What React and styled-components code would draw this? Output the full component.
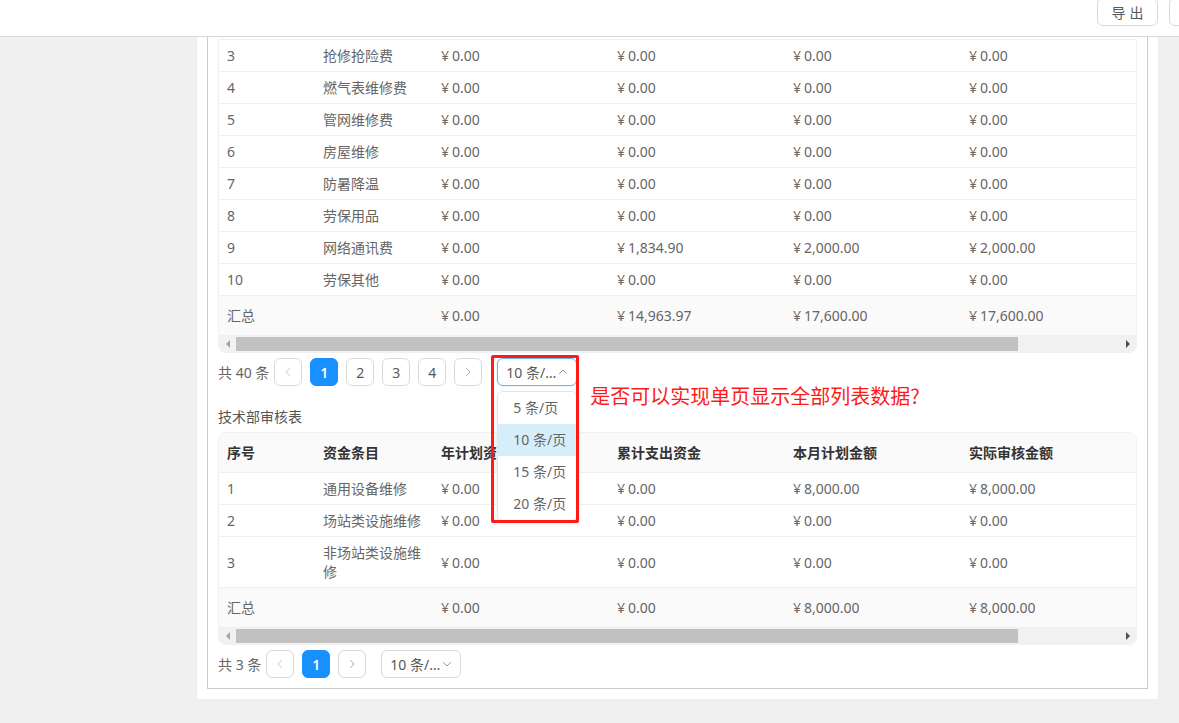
import styled, { createGlobalStyle } from "styled-components"

const GlobalStyle = createGlobalStyle`
    * { box-sizing: border-box; }
    html, body {
        margin: 0;
        padding: 0;
        background: #f0f0f0;
        font-family: "Noto Sans", "Noto Sans CJK SC", sans-serif;
        font-size: 14px;
        color: #666666;
        overflow: hidden;
    }
`

const StyledTopBar = styled.header`
    height: 37px;
    background: #ffffff;
    border-bottom: 1px solid #d6d6d6;
    display: flex;
    justify-content: flex-end;
    align-items: flex-start;
    overflow: hidden;
`
const StyledTopActions = styled.div`
    display: flex;
    gap: 11px;
    margin-right: -70px;
    flex-shrink: 0;
`
const StyledTopButton = styled.button`
    width: ${(p) => (p.$wide ? "80px" : "61px")};
    height: 28px;
    margin-top: -2px;
    border: 1px solid #d9d9d9;
    border-radius: 6px;
    background: #ffffff;
    color: #595959;
    font-family: inherit;
    font-size: 14px;
    letter-spacing: 4px;
    padding: 0 0 0 4px;
`

const StyledMain = styled.main`
    padding: 0 21px 0 197px;
`
const StyledCard = styled.section`
    background: #ffffff;
    padding: 0 10px 10px;
    box-shadow: 0 1px 2px rgba(0, 0, 0, 0.05);
`
const StyledFrame = styled.div`
    border: 1px solid #cccccc;
    border-top: none;
    padding: 2px 10px 10px;
`

const StyledTableWrap = styled.div`
    border: 1px solid #f0f0f0;
    border-top: ${(p) => (p.$cut ? "none" : "1px solid #f0f0f0")};
    border-radius: ${(p) => (p.$cut ? "0 0 8px 8px" : "8px")};
    overflow: hidden;
`
const StyledRow = styled.div`
    display: grid;
    grid-template-columns: 96px 118px 176px 176px 176px 1fr;
    align-items: center;
    min-height: ${(p) => (p.$tall ? "40px" : "32px")};
    border-bottom: 1px solid #f0f0f0;
    border-top: ${(p) => (p.$topLine ? "1px solid #f0f0f0" : "none")};
    background: ${(p) => (p.$shade ? "#fafafa" : "#ffffff")};
    color: ${(p) => (p.$head ? "#333333" : "#666666")};
    font-weight: ${(p) => (p.$head ? 600 : 400)};
`
const StyledCell = styled.div`
    padding: 6px 8px;
    line-height: 19px;
    white-space: normal;
`
const StyledYen = styled.span`
    margin-right: 3px;
`

const StyledScrollbar = styled.div`
    display: flex;
    align-items: center;
    height: 16px;
    background: #f1f1f1;
`
const StyledArrow = styled.span`
    width: 17px;
    height: 16px;
    display: flex;
    align-items: center;
    justify-content: center;
    flex-shrink: 0;
    &::before {
        content: "";
        border-top: 4px solid transparent;
        border-bottom: 4px solid transparent;
        border-${(p) => (p.$dir === "left" ? "right" : "left")}: 4px solid ${(p) => (p.$dim ? "#a3a3a3" : "#505050")};
    }
`
const StyledTrack = styled.div`
    flex: 1;
    height: 16px;
    padding: 1px 0;
`
const StyledThumb = styled.div`
    height: 14px;
    width: 88.6%;
    background: #c1c1c1;
`

const StyledPager = styled.div`
    display: flex;
    align-items: center;
    margin-top: 5px;
    height: 28px;
`
const StyledTotal = styled.span`
    color: #666666;
    margin-right: 5px;
    white-space: nowrap;
`
const StyledPageList = styled.div`
    display: flex;
    gap: 8px;
`
const StyledPageItem = styled.button`
    width: 28px;
    height: 28px;
    border-radius: 6px;
    border: 1px solid ${(p) => (p.$active ? "#1890ff" : "#d9d9d9")};
    background: ${(p) => (p.$active ? "#1890ff" : "#ffffff")};
    color: ${(p) => (p.$active ? "#ffffff" : "#595959")};
    font-family: inherit;
    font-size: 14px;
    font-weight: ${(p) => (p.$active ? 600 : 400)};
    display: flex;
    align-items: center;
    justify-content: center;
    padding: 0;
`
const StyledSizeSelect = styled.div`
    position: relative;
    margin-left: 15px;
`
const StyledSelectBox = styled.div`
    width: 80px;
    height: 28px;
    border-radius: 6px;
    border: 1px solid ${(p) => (p.$open ? "#69b8f5" : "#d9d9d9")};
    box-shadow: ${(p) => (p.$open ? "0 0 0 1px rgba(24,144,255,0.08)" : "none")};
    display: flex;
    align-items: center;
    padding: 0 7px 0 8px;
    background: #ffffff;
`
const StyledSelectText = styled.span`
    flex: 1;
    min-width: 0;
    overflow: hidden;
    text-overflow: ellipsis;
    white-space: nowrap;
    color: #595959;
`
const StyledDropdown = styled.ul`
    position: absolute;
    top: 33px;
    left: 0;
    width: 80px;
    margin: 0;
    padding: 0;
    list-style: none;
    background: #ffffff;
    border: 1px solid #e4e4e4;
    border-radius: 6px;
    box-shadow: 0 3px 6px rgba(0, 0, 0, 0.08);
    overflow: hidden;
    z-index: 2;
`
const StyledOption = styled.li`
    height: 32px;
    line-height: 32px;
    padding: 0 15px;
    color: #666666;
    background: ${(p) => (p.$active ? "#d6eefa" : "#ffffff")};
    white-space: nowrap;
`
const StyledMarkBox = styled.div`
    position: absolute;
    left: -6px;
    top: -3px;
    width: 88px;
    height: 168px;
    border: 3px solid #ff1a1a;
    border-radius: 2px;
    z-index: 3;
    pointer-events: none;
`
const StyledNote = styled.div`
    position: absolute;
    left: 93px;
    top: 25px;
    line-height: 26px;
    font-size: 20px;
    color: #ff1a1a;
    white-space: nowrap;
    font-family: "Noto Sans CJK SC", sans-serif;
`

const StyledSectionTitle = styled.h4`
    margin: 21px 0 5px;
    font-size: 14px;
    font-weight: 400;
    line-height: 20px;
    color: #555555;
`

const Chevron = ({ dir, color = "#bfbfbf", size = 12 }) => {
    const d = {
        left: "M7.5 2.5 4 6l3.5 3.5",
        right: "M4.5 2.5 8 6 4.5 9.5",
        up: "M2.5 7.5 6 4l3.5 3.5",
        down: "M2.5 4.5 6 8l3.5-3.5",
    }[dir]
    return (
        <svg width={size} height={size} viewBox="0 0 12 12" fill="none">
            <path d={d} stroke={color} strokeWidth="1" strokeLinecap="round" strokeLinejoin="round" />
        </svg>
    )
}

const Scrollbar = () => (
    <StyledScrollbar>
        <StyledArrow $dir="left" $dim />
        <StyledTrack>
            <StyledThumb />
        </StyledTrack>
        <StyledArrow $dir="right" />
    </StyledScrollbar>
)

const Money = ({ value }) => (
    <>
        <StyledYen>¥</StyledYen>
        {value}
    </>
)

const headers = ["序号", "资金条目", "年计划资金", "累计支出资金", "本月计划金额", "实际审核金额"]

const DataTable = ({ rows, total, cut }) => (
    <StyledTableWrap $cut={cut}>
        {!cut && (
            <StyledRow $head $shade $tall>
                {headers.map((h) => (
                    <StyledCell key={h}>{h}</StyledCell>
                ))}
            </StyledRow>
        )}
        {rows.map((r, i) => (
            <StyledRow key={r[0]} $topLine={cut && i === 0}>
                {r.map((c, j) => (
                    <StyledCell key={j}>{j > 1 ? <Money value={c} /> : c}</StyledCell>
                ))}
            </StyledRow>
        ))}
        <StyledRow $shade $tall>
            <StyledCell>汇总</StyledCell>
            <StyledCell />
            {total.map((t, j) => (
                <StyledCell key={j}>
                    <Money value={t} />
                </StyledCell>
            ))}
        </StyledRow>
        <Scrollbar />
    </StyledTableWrap>
)

const Pager = ({ total, pages, open }) => (
    <StyledPager>
        <StyledTotal>共 {total} 条</StyledTotal>
        <StyledPageList>
            <StyledPageItem>
                <Chevron dir="left" color="#c8c8c8" />
            </StyledPageItem>
            {Array.from({ length: pages }, (_, i) => (
                <StyledPageItem key={i} $active={i === 0}>
                    {i + 1}
                </StyledPageItem>
            ))}
            <StyledPageItem>
                <Chevron dir="right" color="#a8a8a8" />
            </StyledPageItem>
        </StyledPageList>
        <StyledSizeSelect>
            <StyledSelectBox $open={open}>
                <StyledSelectText>10 条/页</StyledSelectText>
                <Chevron dir={open ? "up" : "down"} color="#999999" />
            </StyledSelectBox>
            {open && (
                <>
                    <StyledDropdown>
                        {[5, 10, 15, 20].map((n) => (
                            <StyledOption key={n} $active={n === 10}>
                                {n} 条/页
                            </StyledOption>
                        ))}
                    </StyledDropdown>
                    <StyledMarkBox />
                    <StyledNote>是否可以实现单页显示全部列表数据?</StyledNote>
                </>
            )}
        </StyledSizeSelect>
    </StyledPager>
)

const firstRows = [
    ["3", "抢修抢险费", "0.00", "0.00", "0.00", "0.00"],
    ["4", "燃气表维修费", "0.00", "0.00", "0.00", "0.00"],
    ["5", "管网维修费", "0.00", "0.00", "0.00", "0.00"],
    ["6", "房屋维修", "0.00", "0.00", "0.00", "0.00"],
    ["7", "防暑降温", "0.00", "0.00", "0.00", "0.00"],
    ["8", "劳保用品", "0.00", "0.00", "0.00", "0.00"],
    ["9", "网络通讯费", "0.00", "1,834.90", "2,000.00", "2,000.00"],
    ["10", "劳保其他", "0.00", "0.00", "0.00", "0.00"],
]

const techRows = [
    ["1", "通用设备维修", "0.00", "0.00", "8,000.00", "8,000.00"],
    ["2", "场站类设施维修", "0.00", "0.00", "0.00", "0.00"],
    ["3", "非场站类设施维修", "0.00", "0.00", "0.00", "0.00"],
]

const App = () => {
    return (
        <>
            <GlobalStyle />
            <StyledTopBar>
                <StyledTopActions>
                    <StyledTopButton>导出</StyledTopButton>
                    <StyledTopButton $wide>打印</StyledTopButton>
                </StyledTopActions>
            </StyledTopBar>
            <StyledMain>
                <StyledCard>
                    <StyledFrame>
                        <DataTable cut rows={firstRows} total={["0.00", "14,963.97", "17,600.00", "17,600.00"]} />
                        <Pager total={40} pages={4} open />
                        <StyledSectionTitle>技术部审核表</StyledSectionTitle>
                        <DataTable rows={techRows} total={["0.00", "0.00", "8,000.00", "8,000.00"]} />
                        <Pager total={3} pages={1} />
                    </StyledFrame>
                </StyledCard>
            </StyledMain>
        </>
    )
}

export default App
